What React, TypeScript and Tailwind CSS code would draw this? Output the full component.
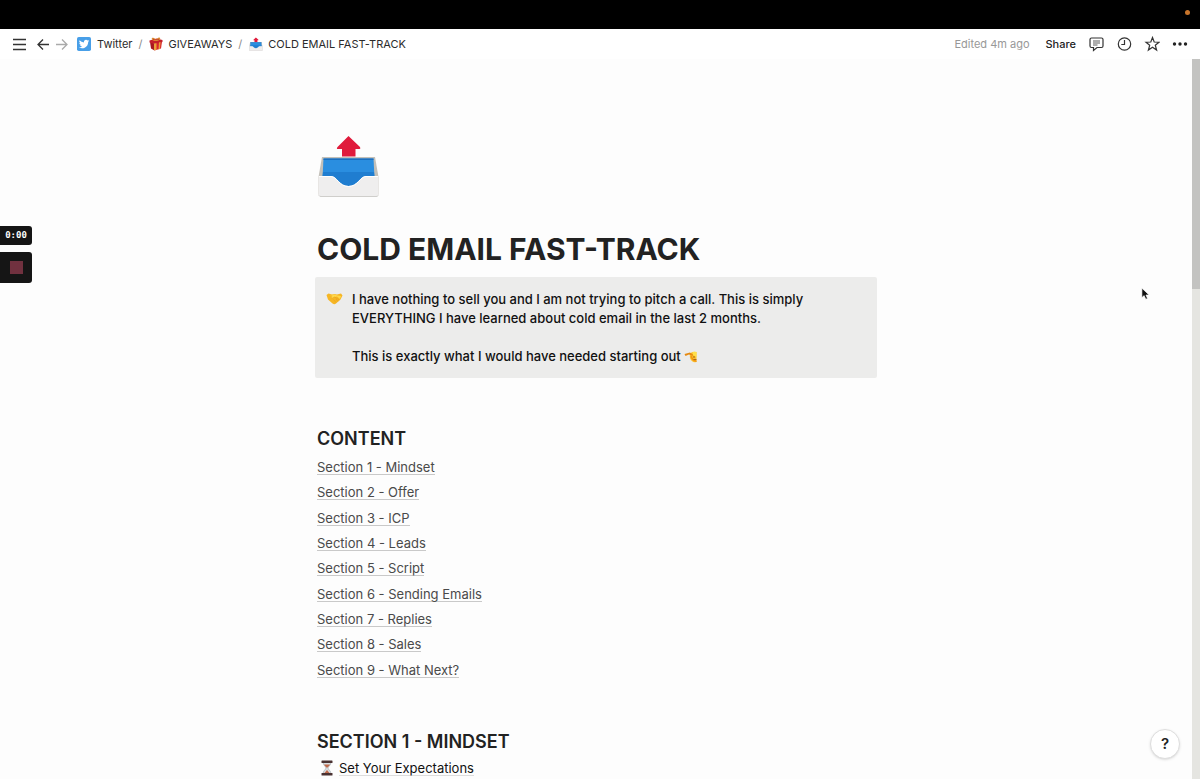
import type { ReactNode } from 'react'

const sections = [
  'Section 1 - Mindset',
  'Section 2 - Offer',
  'Section 3 - ICP',
  'Section 4 - Leads',
  'Section 5 - Script',
  'Section 6 - Sending Emails',
  'Section 7 - Replies',
  'Section 8 - Sales',
  'Section 9 - What Next?',
]

function OutboxIcon({ className }: { className: string }) {
  return (
    <svg viewBox="0 0 64 64" className={className} aria-hidden="true">
      <path d="M31.500 2 L43 13 Q44 15 42.500 15 H38.500 V22.500 H25 V15 H21 Q19 15 20.500 13 Z" fill="#e01b3c" />
      <path d="M5 23 H58 L61.500 43 V60 Q61.500 62 60 62 H3 Q1.500 62 1.500 60 V43 Z" fill="#c3c0b9" />
      <path d="M6.500 24.500 H56.500 L57.500 44 H5.500 Z" fill="#2a8ee0" />
      <path d="M6.500 24.500 H56.500 V26 H6.500 Z" fill="#1d6fbd" />
      <path d="M6 38 H57 L57.500 43 C47 43 45 52 31.500 52 C18 52 16 43 5.500 43 Z" fill="#1f7dd0" />
      <path d="M1.500 42 H14 C20 42 22 52 31.500 52 C41 52 43 42 49 42 H61.500 V60.500 Q61.500 62.500 59.500 62.500 H3.500 Q1.500 62.500 1.500 60.500 Z" fill="#efeeee" />
      <path d="M2 42.500 H14 C20 42.500 22 52.500 31.500 52.500 C41 52.500 43 42.500 49 42.500 H61" fill="none" stroke="#fff" strokeWidth="1" />
      <path d="M2 61.500 Q2.500 62.500 4 62.500 H59 Q61 62.500 61 61.500" fill="none" stroke="#cfcecb" strokeWidth="1" />
    </svg>
  )
}

function TwitterIcon() {
  return (
    <svg viewBox="0 0 24 24" className="size-[14px]" aria-hidden="true">
      <rect width="24" height="24" rx="3" fill="#489fe8" />
      <path
        transform="translate(3.2 3.200) scale(.74)"
        d="M23.950 4.570a10 10 0 0 1-2.820.770 4.960 4.960 0 0 0 2.160-2.720 9.900 9.900 0 0 1-3.120 1.180 4.920 4.920 0 0 0-8.380 4.480A13.930 13.930 0 0 1 1.640 3.160a4.920 4.920 0 0 0 1.520 6.570 4.900 4.900 0 0 1-2.230-.610v.060a4.920 4.920 0 0 0 3.950 4.830 5 5 0 0 1-2.210.080 4.940 4.940 0 0 0 4.600 3.420A9.870 9.870 0 0 1 0 19.540a13.940 13.940 0 0 0 7.550 2.210c9.050 0 14-7.500 14-13.980v-.640a9.940 9.940 0 0 0 2.400-2.560z"
        fill="#fff"
      />
    </svg>
  )
}

function GiftIcon() {
  return (
    <svg viewBox="0 0 28 28" className="size-[14px]" aria-hidden="true">
      <path d="M2 10 L11 13 V27 L4 23 Z" fill="#a81820" />
      <path d="M11 13 L26 9.500 L24 23 L11 27 Z" fill="#d9272e" />
      <path d="M1 7 L15 3 L27 6 V10 L11 14 L1 11 Z" fill="#c4202a" />
      <path d="M10 13 L15 12.500 V26 L10 26.500 Z" fill="#e9a23a" />
      <path d="M20 11 L23 10 L22 24 L19 25 Z" fill="#e9a23a" />
      <path d="M14 8 C8 8 4 5 6 2 C9 0 13 3 14 7 C16 2 20 0 22 2 C24 5 19 8 14 8 Z" fill="#dc8b34" />
      <path d="M13 6 L9 3.500 L8 5 Z M15 6 L19 3.500 L20 5 Z" fill="#a81820" />
    </svg>
  )
}

function HandshakeIcon() {
  return (
    <svg viewBox="0 0 34 24" className="mt-[3px] h-[12px] w-[17px] shrink-0" aria-hidden="true">
      <path d="M1 4 L5 1 L12 3 L17 2 L22 3 L30 1 L33 5 L29 13 L20 21 Q17 24 13 21 L4 13 Z" fill="#f6b624" />
      <path d="M6 4 L13 5 L10 9 Q13 12 17 8 L22 7 L28 12 L30 6 L23 5 L17 3 Z" fill="#ffd84a" />
      <path d="M10 9 Q12 12 17 8 L27 14 M20 12 L24 17 M15 13 L20 19" fill="none" stroke="#e39a1c" strokeWidth="1" />
    </svg>
  )
}

function SaluteIcon() {
  return (
    <svg viewBox="0 0 26 26" className="inline-block size-[13px] align-[-2px]" aria-hidden="true">
      <path d="M25 4 V24 Q15 26 12 16 Q10 6 17 4 Z" fill="#fbc02a" />
      <path d="M17 4 Q21 2 25 4 V14 L18 10 Z" fill="#ffe04a" />
      <path d="M1 8 L12 5 L18 9 L17 12 L10 9 L3 12 Z" fill="#e58a13" />
      <path d="M13 12 Q14 22 25 24 V21 Q17 19 16 12 Z" fill="#ef9415" />
      <circle cx="20" cy="14" r="1.300" fill="#7a3d0c" />
      <path d="M19 19 H25" stroke="#9c4d0f" strokeWidth="1.500" />
    </svg>
  )
}

function HourglassIcon() {
  return (
    <svg viewBox="0 0 24 32" className="h-[16px] w-[12px]" aria-hidden="true">
      <path d="M4 4 H20 C20 11 14 13 14 16 C14 19 20 21 20 28 H4 C4 21 10 19 10 16 C10 13 4 11 4 4 Z" fill="#d9dfe3" stroke="#8d9398" strokeWidth="1" />
      <path d="M6 9 H18 C17 12 13 14 12 16 C11 14 7 12 6 9 Z" fill="#c06a4c" />
      <path d="M12 20 L18 27 H6 Z" fill="#c06a4c" />
      <rect x="1" y="1" width="22" height="5" rx="1" fill="#4a3232" />
      <rect x="1" y="26" width="22" height="5" rx="1" fill="#4a3232" />
    </svg>
  )
}

function IconButton({ label, children }: { label: string; children: ReactNode }) {
  return (
    <button type="button" aria-label={label} className="flex size-4 items-center justify-center">
      {children}
    </button>
  )
}

function TopBar() {
  return (
    <header className="flex h-[30px] shrink-0 items-center justify-between bg-white pr-3 pl-[11px] text-[11px] text-[#2b2b2b]">
      <nav aria-label="Breadcrumb" className="flex items-center">
        <IconButton label="Open sidebar">
          <svg viewBox="0 0 16 16" className="size-4" fill="none" stroke="#333" strokeWidth="1.300">
            <path d="M2 3.500 H15 M2 8.500 H15 M2 13.500 H15" />
          </svg>
        </IconButton>
        <div className="ml-2 flex gap-[3px]">
          <IconButton label="Back">
            <svg viewBox="0 0 16 16" className="size-4" fill="none" stroke="#333" strokeWidth="1.300">
              <path d="M14 8.500 H3 M8 3.500 L3 8.500 L8 13.500" />
            </svg>
          </IconButton>
          <IconButton label="Forward">
            <svg viewBox="0 0 16 16" className="size-4" fill="none" stroke="#aaa" strokeWidth="1.300">
              <path d="M2 8.500 H13 M8 3.500 L13 8.500 L8 13.500" />
            </svg>
          </IconButton>
        </div>
        <a href="#twitter" className="ml-[7px] flex items-center gap-[6px]">
          <TwitterIcon />
          Twitter
        </a>
        <span className="mr-[7px] ml-[6px] text-[#8a8a8a]">/</span>
        <a href="#giveaways" className="flex items-center gap-[5px]">
          <GiftIcon />
          GIVEAWAYS
        </a>
        <span className="mr-[7px] ml-[6px] text-[#8a8a8a]">/</span>
        <a href="#cold-email" className="flex items-center gap-[5px]">
          <OutboxIcon className="size-[14px]" />
          COLD EMAIL FAST-TRACK
        </a>
      </nav>

      <div className="flex items-center gap-3">
        <span className="mr-1 text-[#989898]">Edited 4m ago</span>
        <button type="button" className="font-medium text-[#222]">Share</button>
        <IconButton label="Comments">
          <svg viewBox="0 0 16 16" className="size-4" fill="none" stroke="#333" strokeWidth="1.200">
            <path d="M3.500 2 H13.500 Q15 2 15 3.500 V10 Q15 11.500 13.500 11.500 H9 L5.500 14.500 V11.500 H3.500 Q2 11.500 2 10 V3.500 Q2 2 3.500 2 Z" />
            <path d="M5 5 H12 M5 7 H12 M5 9 H9.500" strokeWidth="0.800" />
          </svg>
        </IconButton>
        <IconButton label="Updates">
          <svg viewBox="0 0 16 16" className="size-4" fill="none" stroke="#333" strokeWidth="1.200">
            <circle cx="8.500" cy="8" r="6.200" />
            <path d="M8.500 4 V8.500 H5.300" />
          </svg>
        </IconButton>
        <IconButton label="Favorite">
          <svg viewBox="0 0 16 16" className="size-4" fill="none" stroke="#333" strokeWidth="1.200">
            <path d="M8.500 1.500 L10.200 6 L15 6.200 L11.300 9.200 L12.600 14 L8.500 11.200 L4.400 14 L5.700 9.200 L2 6.200 L6.800 6 Z" />
          </svg>
        </IconButton>
        <IconButton label="More">
          <svg viewBox="0 0 16 16" className="size-4" fill="#222">
            <circle cx="2.500" cy="8" r="1.700" />
            <circle cx="8" cy="8" r="1.700" />
            <circle cx="13.500" cy="8" r="1.700" />
          </svg>
        </IconButton>
      </div>
    </header>
  )
}

export default function App() {
  return (
    <div className="relative flex h-screen flex-col overflow-hidden bg-[#fdfdfd] font-[Inter,sans-serif] text-[#222]">
      <div className="flex h-[29px] shrink-0 items-center justify-end bg-black pr-[10px]">
        <span className="mb-1 size-[5px] rounded-full bg-[#c8752b]" />
      </div>
      <TopBar />

      <div className="flex min-h-0 flex-1">
        <main className="min-w-0 flex-1 overflow-hidden pt-[75px]">
          <div className="mx-auto max-w-[562px]">
            <div className="px-[2px]">
              <OutboxIcon className="size-16" />
              <h1 className="mt-[31px] text-[30px] leading-10 font-bold">COLD EMAIL FAST-TRACK</h1>
            </div>

            <aside className="mt-2 flex gap-[9px] rounded-[2px] bg-[#ececeb] px-[11px] pt-[13px] pb-3 text-[13px] leading-[19px] font-medium text-[#111]">
              <HandshakeIcon />
              <div>
                <p>
                  I have nothing to sell you and I am not trying to pitch a call. This is simply
                  <br />
                  EVERYTHING I have learned about cold email in the last 2 months.
                </p>
                <p className="mt-[19px]">
                  This is exactly what I would have needed starting out <SaluteIcon />
                </p>
              </div>
            </aside>

            <div className="px-[2px]">
              <h2 className="mt-[49px] text-[18px] leading-6 font-semibold">CONTENT</h2>
              <ul className="mt-1 grid h-[228px] text-[13px] leading-[14px] text-[#4a4a4a]">
                {sections.map((title, i) => (
                  <li key={title} className="flex items-center">
                    <a href={`#section-${i + 1}`} className="border-b border-[#c9c9c9]">{title}</a>
                  </li>
                ))}
              </ul>

              <h2 className="mt-[47px] text-[18px] leading-6 font-semibold">SECTION 1 - MINDSET</h2>
              <div className="mt-[6px] flex items-center gap-[6px] pl-[4px] text-[13px] leading-[14px] text-[#111]">
                <HourglassIcon />
                <a href="#expectations" className="border-b border-[#dcdcdc]">Set Your Expectations</a>
              </div>
            </div>
          </div>
        </main>

        <div className="w-2 shrink-0 bg-[#e5e5e1]">
          <div className="h-[32%] bg-[#c3c3c1]" />
        </div>
      </div>

      {/* recording controls */}
      <div className="absolute top-[226px] left-0 flex w-8 flex-col gap-[7px]">
        <span className="flex h-[19px] items-center justify-center rounded-r-[3px] bg-[#151515] font-['DejaVu_Sans_Mono',monospace] text-[9px] font-bold text-white">
          0:00
        </span>
        <button type="button" aria-label="Stop recording" className="flex h-[31px] items-center justify-center rounded-r-[3px] bg-[#151515]">
          <span className="size-[13px] bg-[#71313f]" />
        </button>
      </div>

      <button
        type="button"
        aria-label="Help"
        className="absolute right-5 bottom-5 flex size-[30px] items-center justify-center rounded-full border border-[#dedede] bg-white text-[15px] font-semibold shadow-sm"
      >
        ?
      </button>

      {/* mouse pointer */}
      <svg viewBox="0 0 10 15" className="absolute top-[287px] right-[50px] h-[14px] w-[9px]" aria-hidden="true">
        <path d="M1 1 V11.500 L3.500 9.300 L5.300 13.300 L7.200 12.400 L5.500 8.600 H9 Z" fill="#111" stroke="#fff" strokeWidth="0.700" />
      </svg>
    </div>
  )
}
